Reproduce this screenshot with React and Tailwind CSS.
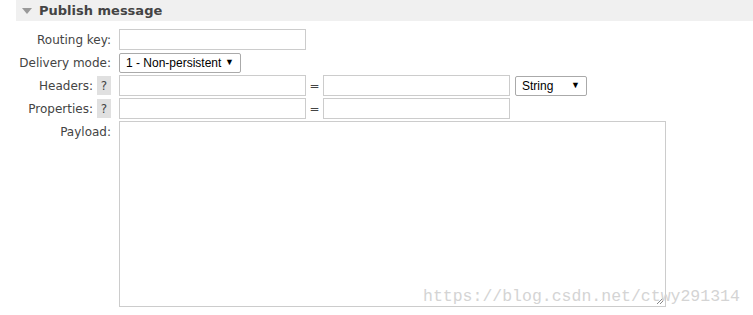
import React from "react";

const labelCls = "w-[112px] shrink-0 flex items-center justify-end gap-[4px] pr-[1px] text-[12px] text-[#444]";
const inputCls = "h-[21px] border border-[#ccc] bg-white";

const Help = () => (
  <span className="w-[14px] h-[19px] bg-[#e0e0e0] text-[#444] text-[12px] flex items-center justify-center">?</span>
);

const Select = ({ text, w }) => (
  <div className={`h-[20px] ${w} border border-[#aaa] rounded-[2px] bg-white flex items-center justify-between px-[6px] text-[12px] text-black`} style={{ fontFamily: '"Liberation Sans", Arial, sans-serif' }}>
    <span>{text}</span>
    <span className="text-[9px]">▼</span>
  </div>
);

const Eq = () => <span className="text-[12px] text-[#444] w-[17px] text-center shrink-0">=</span>;

export default function App() {
  return (
    <div className="w-[753px] h-[315px] bg-white relative overflow-hidden" style={{ fontFamily: '"DejaVu Sans", Verdana, sans-serif' }}>
      <div className="ml-[16px] h-[21px] bg-[#f0f0f0] flex items-center pl-[6px] gap-[7px]">
        <span className="w-0 h-0 border-l-[5px] border-r-[5px] border-t-[6px] border-l-transparent border-r-transparent border-t-[#999]" />
        <span className="text-[13px] font-bold text-[#444]">Publish message</span>
      </div>
      <div className="pt-[8px] flex flex-col gap-[2px]">
        <div className="flex items-center gap-[7px] h-[21px]">
          <div className={labelCls}>Routing key:</div>
          <div className={`${inputCls} w-[187px]`} />
        </div>
        <div className="flex items-center gap-[7px] h-[21px]">
          <div className={labelCls}>Delivery mode:</div>
          <Select text="1 - Non-persistent" w="w-[122px]" />
        </div>
        <div className="flex items-center h-[21px]">
          <div className={`${labelCls} mr-[7px]`}>Headers: <Help /></div>
          <div className={`${inputCls} w-[187px]`} />
          <Eq />
          <div className={`${inputCls} w-[187px]`} />
          <div className="ml-[5px]"><Select text="String" w="w-[72px]" /></div>
        </div>
        <div className="flex items-center h-[21px]">
          <div className={`${labelCls} mr-[7px]`}>Properties: <Help /></div>
          <div className={`${inputCls} w-[187px]`} />
          <Eq />
          <div className={`${inputCls} w-[187px]`} />
        </div>
        <div className="flex items-start gap-[7px]">
          <div className={`${labelCls} h-[21px]`}>Payload:</div>
          <div className="w-[547px] h-[186px] border border-[#ccc] bg-white relative">
            <svg className="absolute right-[1px] bottom-[1px]" width="10" height="10" viewBox="0 0 10 10">
              <path d="M9 3 L3 9 M9 6 L6 9" stroke="#888" strokeWidth="1" />
            </svg>
          </div>
        </div>
      </div>
      <div className="absolute left-[423px] top-[285px] text-[16.5px] text-[#d4d4d4]" style={{ fontFamily: '"Liberation Mono", monospace' }}>
        https://blog.csdn.net/ctwy291314
      </div>
    </div>
  );
}
